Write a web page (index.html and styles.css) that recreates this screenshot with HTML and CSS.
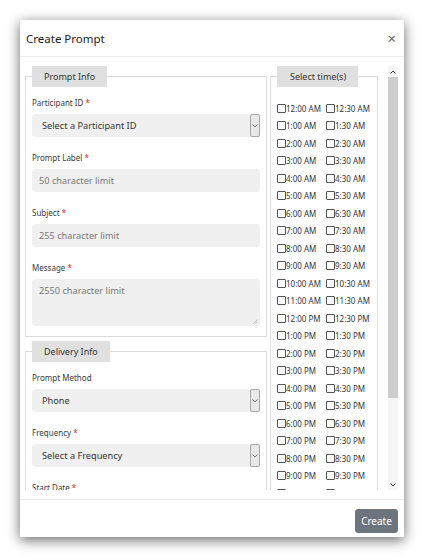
FILE: index.html
```html
<!DOCTYPE html>
<html>
<head>
<meta charset="utf-8">
<link rel="stylesheet" href="styles.css">
</head>
<body>
<div class="page">
  <div class="modal">
    <div class="modal-header">
      <h5 class="modal-title">Create Prompt</h5>
      <span class="close">×</span>
    </div>
    <div class="modal-body">
      <div class="scroll-view">
        <div class="columns">
          <div class="left-col">
            <fieldset class="group">
              <legend>Prompt Info</legend>
              <div class="field">
                <label>Participant ID <span class="req">*</span></label>
                <div class="control select"><span>Select a Participant ID</span><span class="select-btn"><svg width="6" height="4" viewBox="0 0 6 4"><polyline points="0.5,0.5 3,3 5.5,0.5" fill="none" stroke="#666" stroke-width="0.9"/></svg></span></div>
              </div>
              <div class="field">
                <label>Prompt Label <span class="req">*</span></label>
                <div class="control input">50 character limit</div>
              </div>
              <div class="field">
                <label>Subject <span class="req">*</span></label>
                <div class="control input">255 character limit</div>
              </div>
              <div class="field">
                <label>Message <span class="req">*</span></label>
                <div class="control input textarea"><span class="ph">2550 character limit</span><svg class="grip" width="5" height="5" viewBox="0 0 5 5"><line x1="0.5" y1="4.5" x2="4.5" y2="0.5" stroke="#aaa" stroke-width="0.8"/><line x1="2.5" y1="4.5" x2="4.5" y2="2.5" stroke="#aaa" stroke-width="0.8"/></svg></div>
              </div>
            </fieldset>
            <fieldset class="group">
              <legend>Delivery Info</legend>
              <div class="field">
                <label>Prompt Method</label>
                <div class="control select"><span>Phone</span><span class="select-btn"><svg width="6" height="4" viewBox="0 0 6 4"><polyline points="0.5,0.5 3,3 5.5,0.5" fill="none" stroke="#666" stroke-width="0.9"/></svg></span></div>
              </div>
              <div class="field">
                <label>Frequency <span class="req">*</span></label>
                <div class="control select"><span>Select a Frequency</span><span class="select-btn"><svg width="6" height="4" viewBox="0 0 6 4"><polyline points="0.5,0.5 3,3 5.5,0.5" fill="none" stroke="#666" stroke-width="0.9"/></svg></span></div>
              </div>
              <div class="field">
                <label>Start Date <span class="req">*</span></label>
                <div class="control input">mm/dd/yyyy</div>
              </div>
              <div class="field">
                <label>End Date <span class="req">*</span></label>
                <div class="control input">mm/dd/yyyy</div>
              </div>
            </fieldset>
          </div>
          <fieldset class="group times">
            <legend>Select time(s)</legend>
            <div class="time-grid">
              <label class="time"><span class="cb"></span>12:00 AM</label><label class="time"><span class="cb"></span>12:30 AM</label>
              <label class="time"><span class="cb"></span>1:00 AM</label><label class="time"><span class="cb"></span>1:30 AM</label>
              <label class="time"><span class="cb"></span>2:00 AM</label><label class="time"><span class="cb"></span>2:30 AM</label>
              <label class="time"><span class="cb"></span>3:00 AM</label><label class="time"><span class="cb"></span>3:30 AM</label>
              <label class="time"><span class="cb"></span>4:00 AM</label><label class="time"><span class="cb"></span>4:30 AM</label>
              <label class="time"><span class="cb"></span>5:00 AM</label><label class="time"><span class="cb"></span>5:30 AM</label>
              <label class="time"><span class="cb"></span>6:00 AM</label><label class="time"><span class="cb"></span>6:30 AM</label>
              <label class="time"><span class="cb"></span>7:00 AM</label><label class="time"><span class="cb"></span>7:30 AM</label>
              <label class="time"><span class="cb"></span>8:00 AM</label><label class="time"><span class="cb"></span>8:30 AM</label>
              <label class="time"><span class="cb"></span>9:00 AM</label><label class="time"><span class="cb"></span>9:30 AM</label>
              <label class="time"><span class="cb"></span>10:00 AM</label><label class="time"><span class="cb"></span>10:30 AM</label>
              <label class="time"><span class="cb"></span>11:00 AM</label><label class="time"><span class="cb"></span>11:30 AM</label>
              <label class="time"><span class="cb"></span>12:00 PM</label><label class="time"><span class="cb"></span>12:30 PM</label>
              <label class="time"><span class="cb"></span>1:00 PM</label><label class="time"><span class="cb"></span>1:30 PM</label>
              <label class="time"><span class="cb"></span>2:00 PM</label><label class="time"><span class="cb"></span>2:30 PM</label>
              <label class="time"><span class="cb"></span>3:00 PM</label><label class="time"><span class="cb"></span>3:30 PM</label>
              <label class="time"><span class="cb"></span>4:00 PM</label><label class="time"><span class="cb"></span>4:30 PM</label>
              <label class="time"><span class="cb"></span>5:00 PM</label><label class="time"><span class="cb"></span>5:30 PM</label>
              <label class="time"><span class="cb"></span>6:00 PM</label><label class="time"><span class="cb"></span>6:30 PM</label>
              <label class="time"><span class="cb"></span>7:00 PM</label><label class="time"><span class="cb"></span>7:30 PM</label>
              <label class="time"><span class="cb"></span>8:00 PM</label><label class="time"><span class="cb"></span>8:30 PM</label>
              <label class="time"><span class="cb"></span>9:00 PM</label><label class="time"><span class="cb"></span>9:30 PM</label>
              <label class="time"><span class="cb"></span>10:00 PM</label><label class="time"><span class="cb"></span>10:30 PM</label>
              <label class="time"><span class="cb"></span>11:00 PM</label><label class="time"><span class="cb"></span>11:30 PM</label>
            </div>
          </fieldset>
        </div>
      </div>
      <div class="scrollbar">
        <div class="sb-btn"><svg width="6" height="4" viewBox="0 0 6 4"><polyline points="0.5,3.5 3,1 5.5,3.5" fill="none" stroke="#444" stroke-width="1"/></svg></div>
        <div class="sb-track"><div class="sb-thumb"></div></div>
        <div class="sb-btn"><svg width="6" height="4" viewBox="0 0 6 4"><polyline points="0.5,0.5 3,3 5.5,0.5" fill="none" stroke="#444" stroke-width="1"/></svg></div>
      </div>
    </div>
    <div class="modal-footer">
      <button class="btn">Create</button>
    </div>
  </div>
</div>
</body>
</html>
```
FILE: styles.css
```css
body {
  margin: 0;
  background: #fff;
  font-family: "Noto Sans", "Open Sans", sans-serif;
  color: #333;
}
.page {
  padding: 20px;
}
.modal {
  width: 384px;
  background: #fff;
  box-shadow: 0 3px 12px rgba(0, 0, 0, 0.6);
}
.modal-header {
  height: 36px;
  border-bottom: 1px solid #e9ecef;
  display: flex;
  align-items: center;
  justify-content: space-between;
  padding: 0 8px 0 6px;
}
.modal-title {
  margin: 0;
  font-size: 11.5px;
  font-weight: 400;
  color: #222;
}
.close {
  font-size: 15px;
  line-height: 1;
  color: #666;
}
.modal-body {
  display: flex;
  padding: 9px 6px 9px 5px;
}
.scroll-view {
  width: 353px;
  height: 424px;
  overflow: hidden;
}
.columns {
  display: flex;
  gap: 3px;
  align-items: flex-start;
}
.left-col {
  width: 242px;
  display: flex;
  flex-direction: column;
  gap: 4px;
}
fieldset.group {
  margin: 0;
  border: 1px solid #dcdcdc;
  padding: 0 6px 10px;
  min-width: 0;
}
legend {
  background: #e0e0e0;
  padding: 0 12px;
  font-size: 9px;
  line-height: 21px;
  color: #333;
}
.times legend {
  padding: 0 12px 0 13px;
}
.field {
  margin-top: 14px;
}
legend + .field {
  margin-top: 9px;
}
.field label {
  display: block;
  font-size: 8px;
  line-height: 14px;
  color: #3a3a3a;
  margin-bottom: 4px;
}
.req {
  color: #e02424;
}
.control {
  height: 23px;
  box-sizing: border-box;
  background: #f0f0f0;
  border-radius: 3px;
  display: flex;
  align-items: center;
  font-size: 9.2px;
}
.select {
  padding-left: 10px;
  color: #333;
  justify-content: space-between;
}
.select-btn {
  width: 10px;
  height: 23px;
  box-sizing: border-box;
  border: 1px solid #a8a8a8;
  border-radius: 2px;
  background: #e8e8e8;
  display: flex;
  align-items: center;
  justify-content: center;
}
.input {
  padding-left: 7px;
  color: #777;
}
.textarea {
  height: 47px;
  align-items: flex-start;
  padding-top: 5px;
  padding-right: 2px;
}
.textarea .ph {
  flex: 1;
}
.grip {
  align-self: flex-end;
  margin-bottom: 2px;
}
.times {
  width: 108px;
  box-sizing: border-box;
  padding: 0 3px 10px 5px;
}
.time-grid {
  display: grid;
  grid-template-columns: 49px 49px;
  grid-auto-rows: 17.5px;
  padding-top: 12.5px;
}
.time {
  display: flex;
  align-items: center;
  font-size: 8px;
  color: #333;
  white-space: nowrap;
}
.cb {
  width: 9px;
  height: 9px;
  box-sizing: border-box;
  border: 1px solid #555;
  border-radius: 1px;
  background: #fff;
  flex: none;
}
.scrollbar {
  width: 10px;
  margin-left: 10px;
  height: 424px;
  display: flex;
  flex-direction: column;
  background: #f5f5f5;
}
.sb-btn {
  height: 11px;
  display: flex;
  align-items: center;
  justify-content: center;
}
.sb-track {
  flex: 1;
}
.sb-thumb {
  height: 321px;
  background: #cdcdcd;
}
.modal-footer {
  border-top: 1px solid #e9ecef;
  padding: 9px 6px 4px;
  display: flex;
  justify-content: flex-end;
}
.btn {
  height: 24px;
  width: 43px;
  padding: 0;
  background: #6c757d;
  border: 1px solid #6c757d;
  border-radius: 3px;
  color: #fff;
  font-family: "Noto Sans", "Open Sans", sans-serif;
  font-size: 10px;
}
```
